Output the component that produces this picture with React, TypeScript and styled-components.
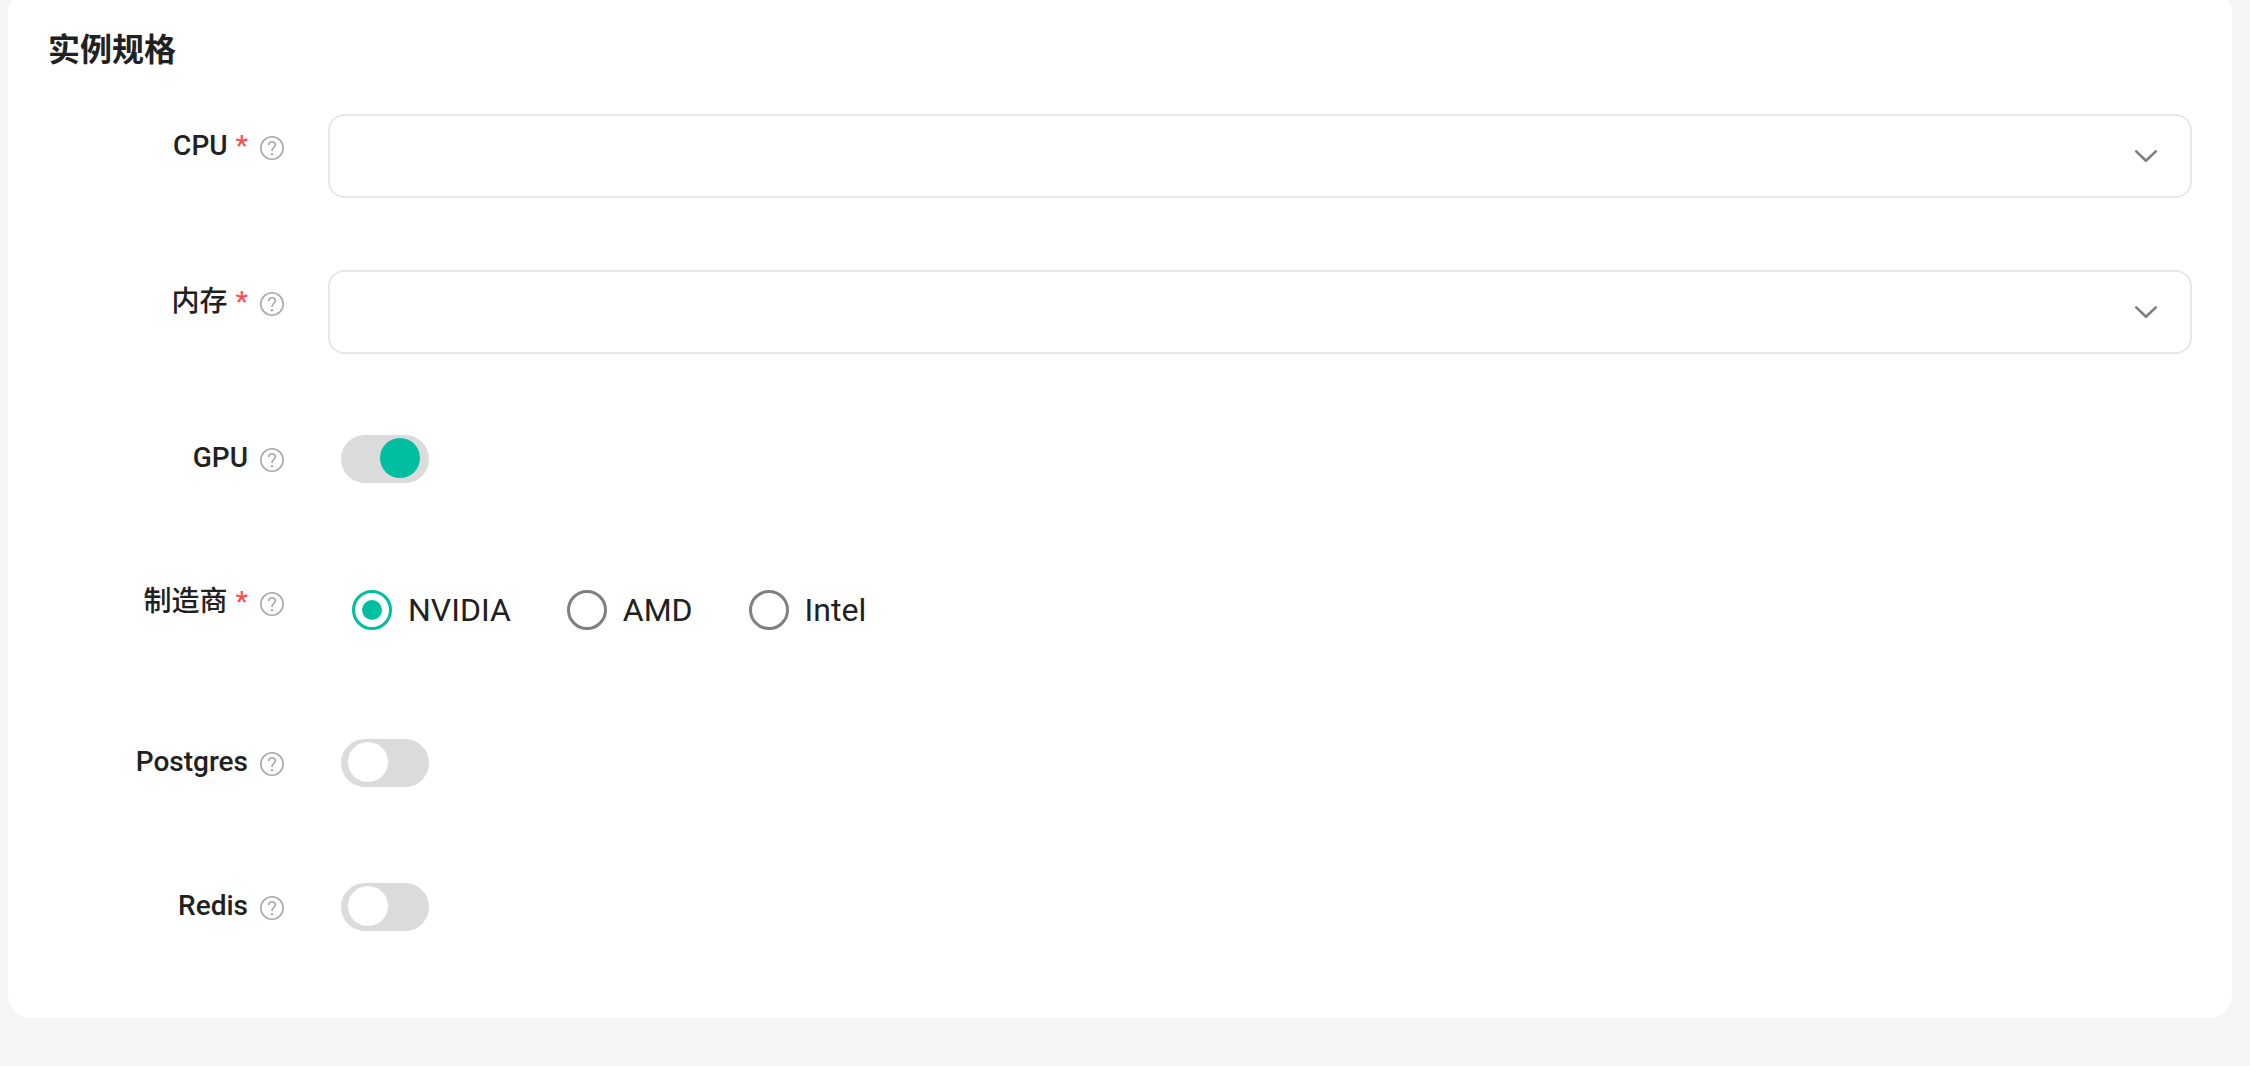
import React, { useId, useState } from "react";
import styled, { createGlobalStyle } from "styled-components";

const color = {
  page: "#f5f5f5",
  card: "#ffffff",
  text: "#212121",
  border: "#e8e8e8",
  track: "#dbdbdb",
  muted: "#808080",
  hint: "#a9a9a9",
  accent: "#00bfa0",
  danger: "#ff4d4f",
};

const GlobalStyle = createGlobalStyle`
  *, *::before, *::after { box-sizing: border-box; }
  body {
    margin: 0;
    background: ${color.page};
    color: ${color.text};
    font-family: Roboto, "Noto Sans CJK SC", sans-serif;
  }
`;

const Page = styled.main`
  display: flow-root;
  min-height: 100vh;
  padding: 0 18px 48px 8px;
  overflow: hidden;
`;

const Card = styled.section`
  margin-top: -12px;
  padding: 38px 40px 72px;
  background: ${color.card};
  border-radius: 24px;
`;

const Title = styled.h2`
  margin: 0 0 40px;
  font-size: 32px;
  font-weight: 600;
  line-height: 48px;
`;

const Form = styled.form`
  display: flex;
  flex-direction: column;
  gap: 72px;
`;

const Row = styled.div`
  display: grid;
  grid-template-columns: 236px minmax(0, 1fr);
  column-gap: 44px;
  align-items: start;
`;

const LabelCell = styled.div`
  display: flex;
  justify-content: flex-end;
  align-items: center;
  gap: 12px;
  padding-top: 12px;
  font-size: 28px;
  font-weight: 500;
  line-height: 40px;
`;

const Required = styled.span`
  margin-left: 8px;
  color: ${color.danger};
`;

const HelpSvg = styled.svg`
  display: block;
  width: 24px;
  height: 24px;
  margin-top: 4px;
`;

const SelectBox = styled.div`
  position: relative;
  color: ${color.muted};
`;

const SelectInput = styled.select`
  appearance: none;
  display: block;
  width: 100%;
  height: 84px;
  padding: 0 80px 0 24px;
  background: ${color.card};
  border: 2px solid ${color.border};
  border-radius: 16px;
  color: ${color.text};
  font: inherit;
  font-size: 28px;
`;

const ChevronSvg = styled.svg`
  position: absolute;
  top: 30px;
  right: 34px;
  width: 24px;
  height: 24px;
  pointer-events: none;
`;

const SwitchCell = styled.div`
  height: 72px;
  padding: 9px 13px;
`;

const SwitchInput = styled.input`
  appearance: none;
  display: block;
  width: 88px;
  height: 48px;
  margin: 0;
  padding: 3px 7px;
  background: ${color.track};
  border-radius: 24px;
  cursor: pointer;

  &::before {
    content: "";
    display: block;
    width: 40px;
    height: 40px;
    border-radius: 50%;
    background: ${color.card};
  }

  &:checked::before {
    margin-left: 32px;
    background: ${color.accent};
  }
`;

const RadioCell = styled.div`
  display: flex;
  align-items: center;
  gap: 56px;
  height: 88px;
  padding: 0 24px 8px;
`;

const RadioLabel = styled.label`
  display: flex;
  align-items: center;
  gap: 16px;
  font-size: 32px;
  line-height: 40px;
  cursor: pointer;
`;

const RadioInput = styled.input`
  appearance: none;
  display: grid;
  place-items: center;
  width: 40px;
  height: 40px;
  margin: 0;
  border: 3px solid ${color.muted};
  border-radius: 50%;
  cursor: pointer;

  &:checked {
    border-color: ${color.accent};
  }

  &:checked::before {
    content: "";
    width: 20px;
    height: 20px;
    border-radius: 50%;
    background: ${color.accent};
  }
`;

function HelpIcon() {
  return (
    <HelpSvg viewBox="0 0 24 24" fill="none" stroke={color.hint} aria-hidden="true">
      <circle cx="12" cy="12" r="11.2" strokeWidth="1.6" />
      <path
        d="M8.8 8.9C8.8 7 10.1 5.8 12 5.8s3.3 1.2 3.3 2.9c0 1.4-.7 2.1-1.7 2.9-1.1.9-1.6 1.6-1.6 2.9v.6"
        strokeWidth="1.6"
      />
      <circle cx="12" cy="18.2" r="1.2" fill={color.hint} stroke="none" />
    </HelpSvg>
  );
}

function Chevron() {
  return (
    <ChevronSvg viewBox="0 0 24 24" fill="none" stroke="currentColor" aria-hidden="true">
      <path d="M2.2 7.4l9.8 9.4 9.8-9.4" strokeWidth="2.7" strokeLinecap="round" strokeLinejoin="round" />
    </ChevronSvg>
  );
}

interface FieldLabelProps {
  text: string;
  htmlFor?: string;
  id?: string;
  required?: boolean;
}

function FieldLabel({ text, htmlFor, id, required }: FieldLabelProps) {
  const content = (
    <>
      {text}
      {required && <Required>*</Required>}
    </>
  );
  return (
    <LabelCell>
      {htmlFor ? <label htmlFor={htmlFor}>{content}</label> : <span id={id}>{content}</span>}
      <HelpIcon />
    </LabelCell>
  );
}

function SelectField({ label }: { label: string }) {
  const id = useId();
  return (
    <Row>
      <FieldLabel text={label} htmlFor={id} required />
      <SelectBox>
        <SelectInput id={id} required />
        <Chevron />
      </SelectBox>
    </Row>
  );
}

function SwitchField({ label, initial = false }: { label: string; initial?: boolean }) {
  const id = useId();
  const [on, setOn] = useState(initial);
  return (
    <Row>
      <FieldLabel text={label} htmlFor={id} />
      <SwitchCell>
        <SwitchInput
          id={id}
          type="checkbox"
          role="switch"
          checked={on}
          onChange={(e) => setOn(e.target.checked)}
        />
      </SwitchCell>
    </Row>
  );
}

function RadioField({ label, options }: { label: string; options: string[] }) {
  const id = useId();
  const [value, setValue] = useState(options[0]);
  return (
    <Row>
      <FieldLabel text={label} id={id} required />
      <RadioCell role="radiogroup" aria-labelledby={id}>
        {options.map((option) => (
          <RadioLabel key={option}>
            <RadioInput
              type="radio"
              name="vendor"
              value={option}
              checked={value === option}
              onChange={() => setValue(option)}
            />
            {option}
          </RadioLabel>
        ))}
      </RadioCell>
    </Row>
  );
}

export default function App() {
  return (
    <>
      <GlobalStyle />
      <Page>
        <Card>
          <Title>实例规格</Title>
          <Form>
            <SelectField label="CPU" />
            <SelectField label="内存" />
            <SwitchField label="GPU" initial />
            <RadioField label="制造商" options={["NVIDIA", "AMD", "Intel"]} />
            <SwitchField label="Postgres" />
            <SwitchField label="Redis" />
          </Form>
        </Card>
      </Page>
    </>
  );
}
